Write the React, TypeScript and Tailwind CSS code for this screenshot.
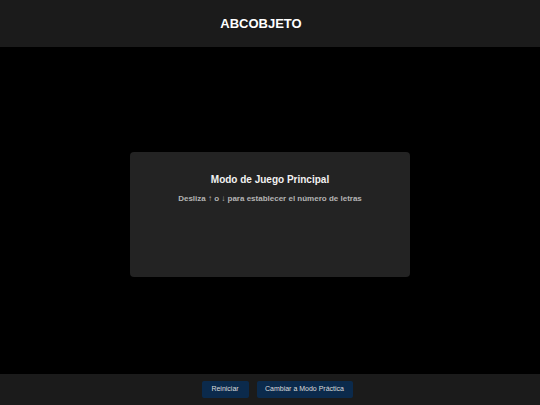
export default function App() {
  return (
    <div className="flex h-[405px] w-[540px] flex-col bg-black font-['Liberation_Sans',Arial,sans-serif] text-white">
      <header className="flex h-[47px] shrink-0 items-center justify-center bg-[#1b1b1b] pr-[18px]">
        <h1 className="text-[13px] font-bold">ABCOBJETO</h1>
      </header>
      <main className="flex flex-1 items-center justify-center pt-[8px]">
        <div className="flex h-[125px] w-[280px] flex-col items-center rounded-[4px] bg-[#232323] pt-[21px]">
          <h2 className="text-[10px] leading-[14px] font-bold text-[#f2f2f2]">Modo de Juego Principal</h2>
          <p className="mt-[7px] text-[8px] leading-[10px] font-bold text-[#b4b4b4]">
            Desliza ↑ o ↓ para establecer el número de letras
          </p>
        </div>
      </main>
      <footer className="flex h-[31px] shrink-0 items-center justify-center gap-[8px] bg-[#1b1b1b] pl-[14px]">
        <button className="h-[17px] w-[47px] rounded-[2px] bg-[#0b2a4c] text-[7px] text-[#dcdcdc]">Reiniciar</button>
        <button className="h-[17px] w-[96px] rounded-[2px] bg-[#0b2a4c] text-[7px] text-[#dcdcdc]">Cambiar a Modo Práctica</button>
      </footer>
    </div>
  );
}
